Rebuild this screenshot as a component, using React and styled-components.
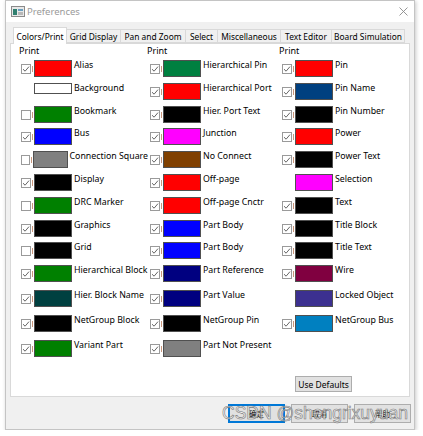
import React from 'react';
import styled, { createGlobalStyle } from 'styled-components';

const GlobalStyle = createGlobalStyle`
  body {
    margin: 0;
    background: #fff;
    font-family: 'Noto Sans', 'Noto Sans CJK SC', sans-serif;
  }
`;

const columns = [
  [
    { label: 'Alias', color: '#ff0000', check: true },
    { label: 'Background', color: '#ffffff', check: null, short: true },
    { label: 'Bookmark', color: '#008000', check: false },
    { label: 'Bus', color: '#0000ff', check: true },
    { label: 'Connection Square', color: '#808080', check: false },
    { label: 'Display', color: '#000000', check: true },
    { label: 'DRC Marker', color: '#008000', check: false },
    { label: 'Graphics', color: '#000000', check: true },
    { label: 'Grid', color: '#000000', check: false },
    { label: 'Hierarchical Block', color: '#008000', check: true },
    { label: 'Hier. Block Name', color: '#004040', check: true },
    { label: 'NetGroup Block', color: '#000000', check: true },
    { label: 'Variant Part', color: '#008000', check: true },
  ],
  [
    { label: 'Hierarchical Pin', color: '#008040', check: true },
    { label: 'Hierarchical Port', color: '#ff0000', check: true },
    { label: 'Hier. Port Text', color: '#000000', check: true },
    { label: 'Junction', color: '#ff00ff', check: true },
    { label: 'No Connect', color: '#804000', check: true },
    { label: 'Off-page', color: '#ff0000', check: true },
    { label: 'Off-page Cnctr', color: '#ff0000', check: true },
    { label: 'Part Body', color: '#0000ff', check: true },
    { label: 'Part Body', color: '#0000ff', check: true },
    { label: 'Part Reference', color: '#000080', check: true },
    { label: 'Part Value', color: '#000080', check: true },
    { label: 'NetGroup Pin', color: '#000000', check: true },
    { label: 'Part Not Present', color: '#808080', check: true },
  ],
  [
    { label: 'Pin', color: '#ff0000', check: true },
    { label: 'Pin Name', color: '#004080', check: true },
    { label: 'Pin Number', color: '#000000', check: true },
    { label: 'Power', color: '#ff0000', check: true },
    { label: 'Power Text', color: '#000000', check: true },
    { label: 'Selection', color: '#ff00ff', check: null },
    { label: 'Text', color: '#000000', check: true },
    { label: 'Title Block', color: '#000000', check: true },
    { label: 'Title Text', color: '#000000', check: true },
    { label: 'Wire', color: '#800040', check: true },
    { label: 'Locked Object', color: '#3c3090', check: null },
    { label: 'NetGroup Bus', color: '#0080c0', check: true },
  ],
];

const tabs = [
  { name: 'Colors/Print', width: 54, active: true },
  { name: 'Grid Display', width: 55 },
  { name: 'Pan and Zoom', width: 66 },
  { name: 'Select', width: 33 },
  { name: 'Miscellaneous', width: 64 },
  { name: 'Text Editor', width: 52 },
  { name: 'Board Simulation', width: 74 },
];

const Window = styled.div`
  position: relative;
  box-sizing: border-box;
  width: 410px;
  height: 430px;
  margin-left: 5px;
  background: #f0f0f0;
  border: 1px solid #c4c4c4;
  box-shadow: 1px 1px 4px rgba(0, 0, 0, 0.22);
  display: flex;
  flex-direction: column;
`;

const TitleBar = styled.div`
  height: 21px;
  background: #fff;
  display: flex;
  align-items: center;
  padding: 0 6px 0 5px;
`;

const TitleText = styled.span`
  margin-left: 2px;
  font-size: 9.5px;
  color: #9a9a9a;
`;

const Close = styled.span`
  margin-left: auto;
  display: flex;
`;

const Body = styled.div`
  flex: 1;
  display: flex;
  flex-direction: column;
  padding: 5px 4px 0 4px;
`;

const TabBar = styled.div`
  display: flex;
  align-items: flex-end;
  height: 16px;
  padding-left: 3px;
`;

const Tab = styled.div`
  box-sizing: border-box;
  width: ${(p) => p.$width}px;
  height: ${(p) => (p.$active ? 17 : 14)}px;
  margin-left: ${(p) => (p.$first ? 0 : -1)}px;
  margin-bottom: ${(p) => (p.$active ? -1 : 0)}px;
  position: relative;
  z-index: ${(p) => (p.$active ? 2 : 1)};
  background: ${(p) => (p.$active ? '#fff' : '#f0f0f0')};
  border: 1px solid #d9d9d9;
  border-bottom: ${(p) => (p.$active ? 'none' : '1px solid #d9d9d9')};
  display: flex;
  align-items: center;
  justify-content: center;
  font-size: 8.4px;
  color: #000;
  white-space: nowrap;
`;

const Panel = styled.div`
  box-sizing: border-box;
  height: 354px;
  background: #fff;
  border: 1px solid #d9d9d9;
  display: flex;
  flex-direction: column;
  padding: 1px 0 0 8px;
`;

const Columns = styled.div`
  display: grid;
  grid-template-columns: 129px 132px 1fr;
`;

const Column = styled.div`
  display: flex;
  flex-direction: column;
`;

const Header = styled.div`
  height: 12px;
  line-height: 12px;
  font-size: 9px;
  margin-left: ${(p) => (p.$first ? 0 : -1)}px;
`;

const Row = styled.div`
  box-sizing: border-box;
  height: ${(p) => p.$h}px;
  padding-top: 3px;
  display: flex;
  align-items: flex-start;
`;

const Check = styled.span`
  box-sizing: border-box;
  width: 10px;
  height: 10px;
  margin: 4px 0 0 2px;
  border: 1px solid #9a9a9a;
  background: #fff;
  display: flex;
  align-items: center;
  justify-content: center;
  visibility: ${(p) => (p.$hidden ? 'hidden' : 'visible')};
`;

const Tick = styled.span`
  width: 1px;
  height: 6px;
  margin: 6px 0 0 1px;
  background: #c9957a;
  visibility: ${(p) => (p.$hidden ? 'hidden' : 'visible')};
`;

const Swatch = styled.span`
  box-sizing: border-box;
  width: 38px;
  height: ${(p) => (p.$short ? 11 : 17)}px;
  margin-left: 1px;
  border: 1px solid #505050;
  background: ${(p) => p.$color};
`;

const Label = styled.span`
  margin-left: 2px;
  font-size: 8.8px;
  line-height: 11px;
  color: #000;
  white-space: nowrap;
`;

const PanelFooter = styled.div`
  margin-top: auto;
  display: flex;
  justify-content: flex-end;
  padding: 0 57px 4px 0;
`;

const Button = styled.button`
  box-sizing: border-box;
  width: 57px;
  height: ${(p) => (p.$tall ? 19 : 16)}px;
  padding: 0;
  background: #e1e1e1;
  border: 1px solid ${(p) => (p.$focus ? '#0078d7' : '#adadad')};
  box-shadow: ${(p) => (p.$focus ? 'inset 0 0 0 1px #0078d7' : 'none')};
  font-family: 'Noto Sans', 'Noto Sans CJK SC', sans-serif;
  font-size: ${(p) => (p.$tall ? 7.5 : 8.5)}px;
  color: #000;
`;

const ButtonBar = styled.div`
  margin-top: 7px;
  display: flex;
  justify-content: flex-end;
  gap: 6px;
  margin-right: -1px;
`;

const Watermark = styled.div`
  position: absolute;
  left: 216px;
  top: 402px;
  font-family: 'Liberation Sans', Arial, sans-serif;
  font-size: 17.5px;
  line-height: 20px;
  color: rgba(255, 255, 255, 0.55);
  -webkit-text-stroke: 0.6px #7a7a7a;
  white-space: nowrap;
  pointer-events: none;
`;

const CheckMark = () => (
  <svg width="8" height="8" viewBox="0 0 8 8">
    <path d="M1 4.2 L3.1 6.2 L7 1.6" fill="none" stroke="#666" strokeWidth="1" />
  </svg>
);

const AppIcon = () => (
  <svg width="14" height="11" viewBox="0 0 14 11">
    <rect x="0.5" y="0.5" width="13" height="10" fill="#e8e8e8" stroke="#8a8a8a" />
    <rect x="2" y="3" width="4" height="6" fill="#2f7f6f" />
    <rect x="7" y="3" width="5" height="2" fill="#6aa0c0" />
    <rect x="7" y="6" width="5" height="3" fill="#b8b8b8" />
  </svg>
);

const CloseIcon = () => (
  <svg width="9" height="9" viewBox="0 0 9 9">
    <path d="M0.5 0.5 L8.5 8.5 M8.5 0.5 L0.5 8.5" stroke="#8a8a8a" strokeWidth="0.9" />
  </svg>
);

const App = () => (
  <>
    <GlobalStyle />
    <Window>
      <TitleBar>
        <AppIcon />
        <TitleText>Preferences</TitleText>
        <Close>
          <CloseIcon />
        </Close>
      </TitleBar>
      <Body>
        <TabBar>
          {tabs.map((t, i) => (
            <Tab key={t.name} $width={t.width} $active={t.active} $first={i === 0}>
              {t.name}
            </Tab>
          ))}
        </TabBar>
        <Panel>
          <Columns>
            {columns.map((col, ci) => (
              <Column key={ci}>
                <Header $first={ci === 0}>Print</Header>
                {col.map((item, i) => (
                  <Row key={item.label + i} $h={i < 9 ? 22.8 : 25}>
                    <Check $hidden={item.check === null}>{item.check && <CheckMark />}</Check>
                    <Tick $hidden={item.check === null} />
                    <Swatch $color={item.color} $short={item.short} />
                    <Label>{item.label}</Label>
                  </Row>
                ))}
              </Column>
            ))}
          </Columns>
          <PanelFooter>
            <Button>Use Defaults</Button>
          </PanelFooter>
        </Panel>
        <ButtonBar>
          <Button $tall $focus>确定</Button>
          <Button $tall>取消</Button>
          <Button $tall>帮助</Button>
        </ButtonBar>
      </Body>
      <Watermark>CSDN @shengrixuyuan</Watermark>
    </Window>
  </>
);

export default App;
